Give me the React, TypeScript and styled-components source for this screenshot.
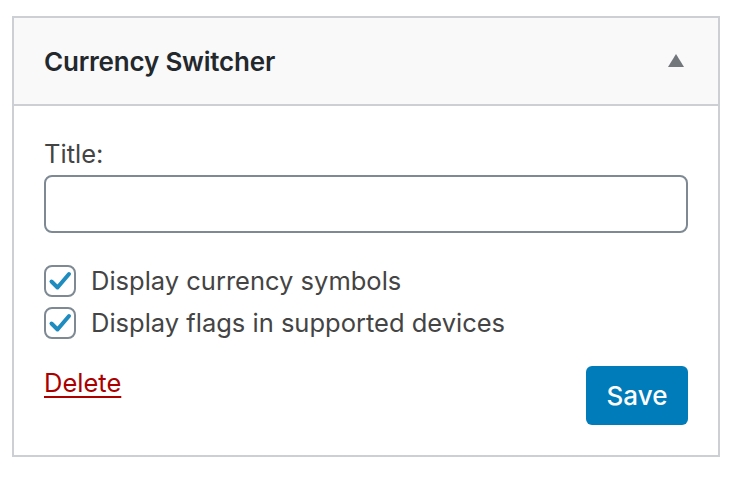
import styled, { createGlobalStyle } from "styled-components";

const GlobalStyle = createGlobalStyle`
  body {
    margin: 0;
    background: #ffffff;
    font-family: Inter, "Liberation Sans", Arial, sans-serif;
  }
`;

function App() {
  return (
    <>
      <GlobalStyle />
      <Widget>
        <Header>
          <WidgetTitle>Currency Switcher</WidgetTitle>
          <Toggle aria-label="Collapse">
            <svg width="16" height="13" viewBox="0 0 16 13">
              <polygon points="8,0 16,13 0,13" fill="#72777c" />
            </svg>
          </Toggle>
        </Header>
        <Body>
          <Label htmlFor="title">Title:</Label>
          <TextInput id="title" type="text" />
          <Options>
            <CheckRow>
              <CheckBox>
                <CheckMark />
              </CheckBox>
              Display currency symbols
            </CheckRow>
            <CheckRow>
              <CheckBox>
                <CheckMark />
              </CheckBox>
              Display flags in supported devices
            </CheckRow>
          </Options>
          <Actions>
            <DeleteLink href="#">Delete</DeleteLink>
            <SaveButton>Save</SaveButton>
          </Actions>
        </Body>
      </Widget>
    </>
  );
}

function CheckMark() {
  return (
    <svg width="24" height="24" viewBox="0 0 24 24">
      <path
        d="M3.5 12.5 L9.5 18.5 L21 5"
        fill="none"
        stroke="#1e8cbe"
        strokeWidth="4"
        strokeLinecap="round"
        strokeLinejoin="round"
      />
    </svg>
  );
}

const Widget = styled.div`
  margin: 16px 12px;
  width: 708px;
  box-sizing: border-box;
  border: 2px solid #ccd0d4;
  background: #ffffff;
`;

const Header = styled.div`
  height: 86px;
  box-sizing: content-box;
  display: flex;
  align-items: center;
  justify-content: space-between;
  padding: 0 34px 0 30px;
  background: #f9f9f9;
  border-bottom: 2px solid #ccd0d4;
`;

const WidgetTitle = styled.h3`
  margin: 0;
  font-size: 26px;
  font-weight: 600;
  color: #23282d;
  letter-spacing: -0.2px;
`;

const Toggle = styled.button`
  border: 0;
  background: none;
  padding: 0;
  display: flex;
  margin-top: -2px;
`;

const Body = styled.div`
  padding: 31px 30px 30px 30px;
  display: flex;
  flex-direction: column;
`;

const Label = styled.label`
  font-size: 25.5px;
  line-height: 34px;
  color: #444444;
`;

const TextInput = styled.input`
  margin-top: 4px;
  height: 58px;
  box-sizing: border-box;
  border: 2px solid #7e8993;
  border-radius: 8px;
  background: #ffffff;
  font-size: 24px;
  padding: 0 16px;
`;

const Options = styled.div`
  margin-top: 32px;
  display: flex;
  flex-direction: column;
  gap: 10px;
`;

const CheckRow = styled.label`
  display: flex;
  align-items: center;
  gap: 15px;
  font-size: 25.5px;
  line-height: 32px;
  color: #444444;
`;

const CheckBox = styled.span`
  width: 32px;
  height: 32px;
  box-sizing: border-box;
  border: 2px solid #7e8993;
  border-radius: 8px;
  display: flex;
  align-items: center;
  justify-content: center;
  flex: none;
`;

const Actions = styled.div`
  margin-top: 26px;
  display: flex;
  justify-content: space-between;
  align-items: flex-start;
`;

const DeleteLink = styled.a`
  font-size: 25.5px;
  line-height: 34px;
  color: #aa0000;
  text-decoration: underline;
  text-underline-offset: 4px;
  text-decoration-thickness: 2px;
  margin-top: 1px;
`;

const SaveButton = styled.button`
  margin-top: 1px;
  width: 102px;
  height: 59px;
  border: 0;
  border-radius: 6px;
  background: #007cba;
  color: #ffffff;
  font-family: inherit;
  font-size: 26px;
  font-weight: 500;
`;

export default App;
